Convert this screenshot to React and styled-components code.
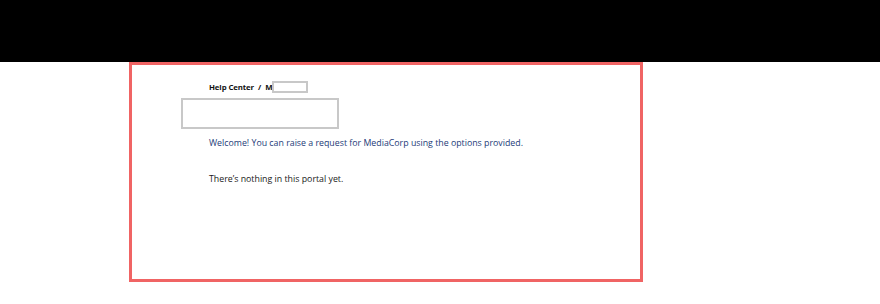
import React from "react";
import styled, { createGlobalStyle } from "styled-components";

const Global = createGlobalStyle`
  html, body { margin: 0; padding: 0; background: #fff; }
  body { font-family: "Open Sans", "Noto Sans", sans-serif; }
`;

const Header = styled.div`
  height: 62px;
  background: #000;
`;

const Frame = styled.div`
  margin-left: 129px;
  width: 508px;
  height: 214px;
  border: 3px solid #f06464;
  display: flex;
  flex-direction: column;
`;

const Crumbs = styled.div`
  display: flex;
  align-items: center;
  margin: 15px 0 0 77px;
  font-size: 7.8px;
  font-weight: 700;
  color: #111;
  height: 13px;
  letter-spacing: -0.1px;
`;

const Sep = styled.span`
  margin: 0 4px;
`;

const Placeholder = styled.span`
  box-sizing: border-box;
  display: inline-block;
  margin-left: 0;
  width: ${(p) => p.$w}px;
  height: ${(p) => p.$h}px;
  border: 2px solid #c8c8c8;
`;

const Logo = styled.div`
  box-sizing: border-box;
  margin: 5px 0 0 49px;
  width: 158px;
  height: 31px;
  border: 2px solid #c8c8c8;
`;

const Welcome = styled.p`
  margin: 7px 0 0 77px;
  font-size: 8.8px;
  color: #1d3b78;
  line-height: 14px;
`;

const Empty = styled.p`
  margin: 22px 0 0 77px;
  font-size: 8.8px;
  color: #1a1a1a;
  line-height: 14px;
`;

export default function App() {
  return (
    <>
      <Global />
      <Header />
      <Frame>
        <Crumbs>
          Help Center<Sep>/</Sep>M<Placeholder $w={36} $h={12} />
        </Crumbs>
        <Logo />
        <Welcome>Welcome! You can raise a request for MediaCorp using the options provided.</Welcome>
        <Empty>There’s nothing in this portal yet.</Empty>
      </Frame>
    </>
  );
}
